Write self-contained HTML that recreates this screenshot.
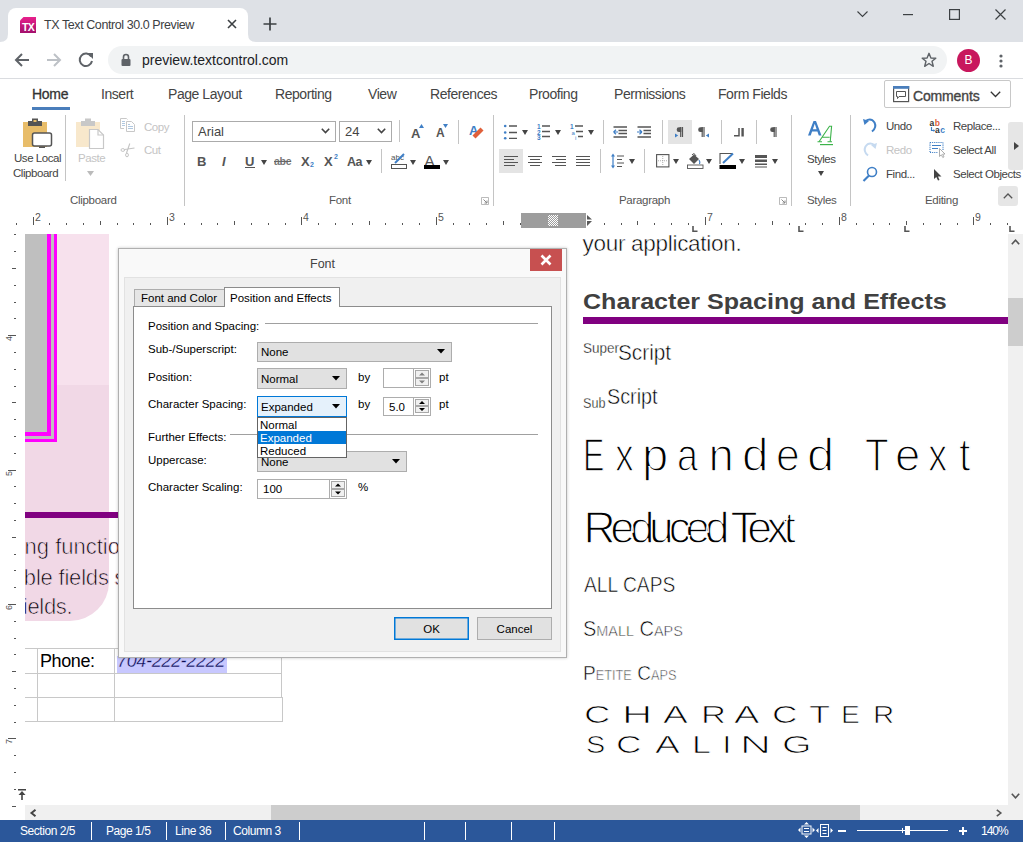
<!DOCTYPE html>
<html><head><meta charset="utf-8">
<style>
*{box-sizing:border-box;margin:0;padding:0}
html,body{width:1023px;height:842px;overflow:hidden;background:#fff;font-family:"Liberation Sans",sans-serif;}
.a{position:absolute}
.t{position:absolute;white-space:nowrap;line-height:1}
svg{position:absolute;overflow:visible}
#tabstrip{left:0;top:0;width:1023px;height:42px;background:#dee1e6}
#tab{left:8px;top:8px;width:240px;height:34px;background:#fff;border-radius:8px 8px 0 0}
#toolbar{left:0;top:42px;width:1023px;height:37px;background:#fff;border-bottom:1px solid #dadce0}
#omni{left:108px;top:46px;width:839px;height:28px;border-radius:14px;background:#f1f3f4}
#rtabs{left:0;top:79px;width:1023px;height:31px;background:#fff}
#ribbon{left:0;top:110px;width:1023px;height:100px;background:#fff;border-bottom:1px solid #c2c2c2}
#ruler{left:0;top:209px;width:1023px;height:23px;background:#fff}
#doc{left:0;top:232px;width:1023px;height:573px;background:#fff}
#hscroll{left:0;top:805px;width:1023px;height:15px;background:#f0f0f0}
#status{left:0;top:820px;width:1023px;height:22px;background:#2b579a}
#dlg{left:118px;top:248px;width:448px;height:409px;background:#f0f0f0;border:1px solid #aaa}
.rt{top:87.2px;font-size:14px;color:#444;letter-spacing:-0.45px}
.rb{font-size:11.5px;color:#444;letter-spacing:-0.45px}
.rl{top:194.5px;font-size:11.5px;color:#555;letter-spacing:-0.3px}
.sep{width:1px;background:#c4c4c4}
.dd{fill:#444}
.dt{font-size:22px;color:#000;-webkit-text-stroke:0.7px #f1d8e6}
.st{top:825px;font-size:12px;color:#fff;letter-spacing:-0.45px}
.ss{top:822px;width:1px;height:18px;background:#fff}
.dl{font-size:11.5px;color:#000;margin-top:1px}
.cb{background:#e1e1e1;border:1px solid #adadad}
.cbt{fill:#000}
.spin{width:16px;background:#e6e6e6;border:1px solid #adadad}
</style></head><body>
<!-- ============ CHROME ============ -->
<div id="tabstrip" class="a"></div>
<div id="tab" class="a"></div>
<svg style="left:0;top:34px" width="8" height="8"><path d="M0 8 Q8 8 8 0 L8 8 Z" fill="#fff"/></svg>
<svg style="left:248px;top:34px" width="8" height="8"><path d="M8 8 Q0 8 0 0 L0 8 Z" fill="#fff"/></svg>
<svg style="left:20px;top:17px" width="16" height="16"><defs><linearGradient id="fg" x1="0" y1="0" x2="0" y2="1"><stop offset="0" stop-color="#e8208c"/><stop offset="1" stop-color="#a3106c"/></linearGradient></defs><path d="M3.5 0 H16 V16 H0 V3.5 Z" fill="url(#fg)"/><text x="8" y="14" font-family="Liberation Sans" font-weight="bold" font-size="10.5" fill="#fff" text-anchor="middle" letter-spacing="-0.8">TX</text></svg>
<div class="t" style="left:44px;top:19px;font-size:12.5px;color:#3c4043;letter-spacing:-0.42px">TX Text Control 30.0 Preview</div>
<svg style="left:227px;top:19px" width="10" height="10"><path d="M1 1 L9 9 M9 1 L1 9" stroke="#3c4043" stroke-width="1.6"/></svg>
<svg style="left:263px;top:17px" width="14" height="14"><path d="M7 0.5 V13.5 M0.5 7 H13.5" stroke="#3c4043" stroke-width="1.7"/></svg>
<svg style="left:857px;top:11px" width="11" height="7"><path d="M0.5 0.5 L5.5 5.5 L10.5 0.5" stroke="#3c4043" stroke-width="1.1" fill="none"/></svg>
<svg style="left:903px;top:14px" width="11" height="1"><rect width="10" height="1.2" fill="#3c4043"/></svg>
<svg style="left:949px;top:9px" width="11" height="11"><rect x="0.6" y="0.6" width="9.8" height="9.8" stroke="#3c4043" stroke-width="1.2" fill="none"/></svg>
<svg style="left:995px;top:9px" width="11" height="11"><path d="M0.5 0.5 L10.5 10.5 M10.5 0.5 L0.5 10.5" stroke="#3c4043" stroke-width="1.2"/></svg>

<div id="toolbar" class="a"></div>
<svg style="left:14px;top:52px" width="16" height="16"><path d="M15 8 H2 M8 2 L2 8 L8 14" stroke="#5f6368" stroke-width="2" fill="none"/></svg>
<svg style="left:46px;top:52px" width="16" height="16"><path d="M1 8 H14 M8 2 L14 8 L8 14" stroke="#bdc1c6" stroke-width="2" fill="none"/></svg>
<svg style="left:78px;top:52px" width="16" height="16"><path d="M13.2 4.5 A6.2 6.2 0 1 0 14 9" stroke="#5f6368" stroke-width="2" fill="none"/><path d="M9 1 L15 1 L15 7 Z" fill="#5f6368"/></svg>
<div id="omni" class="a"></div>
<svg style="left:121px;top:53px" width="10" height="13"><path d="M2.5 6 V4 A2.5 2.5 0 0 1 7.5 4 V6" stroke="#5f6368" stroke-width="1.6" fill="none"/><rect x="0.5" y="6" width="9" height="7" rx="1" fill="#5f6368"/></svg>
<div class="t" style="left:142px;top:53px;font-size:14px;color:#202124">preview.textcontrol.com</div>
<svg style="left:921px;top:52px" width="16" height="16"><path d="M8 1.3 L9.9 6 L14.8 6.2 L11 9.3 L12.3 14.3 L8 11.5 L3.7 14.3 L5 9.3 L1.2 6.2 L6.1 6 Z" stroke="#5f6368" stroke-width="1.4" fill="none" stroke-linejoin="round"/></svg>
<div class="a" style="left:957px;top:49px;width:23px;height:23px;border-radius:50%;background:#c8175d"></div>
<div class="t" style="left:957px;top:54px;width:23px;text-align:center;font-size:12px;color:#fff">B</div>
<svg style="left:999px;top:54px" width="4" height="14"><circle cx="2" cy="2" r="1.6" fill="#5f6368"/><circle cx="2" cy="7" r="1.6" fill="#5f6368"/><circle cx="2" cy="12" r="1.6" fill="#5f6368"/></svg>


<div id="rtabs" class="a"></div>
<div class="t" style="left:32px;top:87.2px;font-size:14px;color:#333;-webkit-text-stroke:0.3px #333;letter-spacing:-0.3px">Home</div>
<div class="a" style="left:32px;top:107px;width:38px;height:3px;background:#4a7ebb"></div>
<div class="t rt" style="left:101px">Insert</div>
<div class="t rt" style="left:168px">Page Layout</div>
<div class="t rt" style="left:275px">Reporting</div>
<div class="t rt" style="left:368px">View</div>
<div class="t rt" style="left:430px">References</div>
<div class="t rt" style="left:529px">Proofing</div>
<div class="t rt" style="left:614px">Permissions</div>
<div class="t rt" style="left:718px">Form Fields</div>
<div class="a" style="left:884px;top:80px;width:127px;height:28px;border:1px solid #c8c8c8;border-radius:2px;background:#fff"></div>
<svg style="left:893px;top:86px" width="17" height="17"><rect x="0.6" y="0.6" width="15" height="15" fill="none" stroke="#555" stroke-width="1.2"/><rect x="0" y="0" width="16.2" height="2.8" fill="#4a7ebb"/><path d="M3.5 5.5 H12.5 V10.5 H6 L4.5 12.5 V10.5 H3.5 Z" fill="none" stroke="#555" stroke-width="1"/></svg>
<div class="t" style="left:913px;top:88.5px;font-size:14px;color:#444;-webkit-text-stroke:0.35px #444;letter-spacing:-0.15px">Comments</div>
<svg style="left:990px;top:91px" width="11" height="7"><path d="M0.8 0.8 L5.5 5.5 L10.2 0.8" stroke="#333" stroke-width="1.3" fill="none"/></svg>

<div id="ribbon" class="a"></div>
<!-- Clipboard group -->
<svg style="left:22px;top:118px" width="32" height="32">
 <rect x="1" y="4" width="24" height="25" fill="#e8bd6a"/>
 <rect x="6" y="3" width="14" height="5" fill="#555"/><rect x="10" y="0.5" width="6" height="4" fill="#555"/><rect x="11.5" y="2" width="3" height="2" fill="#e8bd6a"/>
 <rect x="10.5" y="15" width="19" height="13" rx="2" fill="#fff" stroke="#555" stroke-width="1.5"/>
 <rect x="17" y="28.5" width="6" height="1.5" fill="#555"/>
</svg>
<div class="t rb" style="left:14px;top:152.7px">Use Local</div>
<div class="t rb" style="left:13px;top:167.7px">Clipboard</div>
<div class="a" style="left:65px;top:115px;width:1px;height:66px;background:#c4c4c4"></div>
<svg style="left:76px;top:118px" width="30" height="32">
 <rect x="0" y="4" width="24" height="25" fill="#f8e8cc"/>
 <rect x="5" y="3" width="14" height="5" fill="#c8c8c8"/><rect x="9" y="0.5" width="6" height="4" fill="#c8c8c8"/>
 <path d="M13.5 11.5 H22 L27.5 17 V30.5 H13.5 Z" fill="#fff" stroke="#c8c8c8" stroke-width="1.2"/><path d="M22 11.5 V17 H27.5" fill="none" stroke="#c8c8c8" stroke-width="1.2"/>
</svg>
<div class="t rb" style="left:78px;top:152.7px;color:#c4c4c4">Paste</div>
<svg style="left:87px;top:171px" width="7" height="5"><path d="M0 0 H7 L3.5 5 Z" fill="#bbb"/></svg>
<svg style="left:119px;top:117px" width="18" height="16">
 <path d="M1.5 1.5 H7.5 L8.5 2.5 M1.5 1.5 V11.5 H5" stroke="#c8c8c8" fill="none"/>
 <path d="M7.5 4.5 H12.5 L15.5 7.5 V14.5 H7.5 Z" fill="#fff" stroke="#c8c8c8"/>
 <path d="M3 4.5 H6 M3 6.5 H6 M3 8.5 H6 M9 7.5 H11 M9 9.5 H14 M9 11.5 H14" stroke="#b0c8e0"/>
</svg>
<div class="t rb" style="left:144px;top:121.5px;color:#c4c4c4">Copy</div>
<svg style="left:120px;top:142px" width="16" height="16">
 <ellipse cx="2.8" cy="8" rx="1.8" ry="1.4" fill="none" stroke="#c4c4c4"/>
 <ellipse cx="7" cy="13" rx="1.4" ry="1.8" fill="none" stroke="#c4c4c4"/>
 <path d="M4.5 7.5 L14.5 6 M6.5 11 L9.8 1.5" stroke="#c4c4c4" stroke-width="1.1"/>
</svg>
<div class="t rb" style="left:144px;top:145px;color:#c4c4c4">Cut</div>
<div class="t rl" style="left:70px">Clipboard</div>
<div class="a sep" style="left:184px;top:115px;height:91px"></div>


<!-- Font group -->
<div class="a" style="left:192px;top:121px;width:144px;height:21px;border:1px solid #ababab;background:#fff"></div>
<div class="t" style="left:198px;top:125px;font-size:13px;color:#444">Arial</div>
<svg style="left:321px;top:128px" width="9" height="6"><path d="M0.8 0.8 L4.5 4.5 L8.2 0.8" stroke="#444" stroke-width="1.6" fill="none"/></svg>
<div class="a" style="left:339px;top:121px;width:53px;height:21px;border:1px solid #ababab;background:#fff"></div>
<div class="t" style="left:345px;top:125px;font-size:13px;color:#444">24</div>
<svg style="left:377px;top:128px" width="9" height="6"><path d="M0.8 0.8 L4.5 4.5 L8.2 0.8" stroke="#444" stroke-width="1.6" fill="none"/></svg>
<div class="a sep" style="left:399px;top:120px;height:22px"></div>
<div class="t" style="left:411px;top:127px;font-size:13px;font-weight:bold;color:#555">A</div>
<svg style="left:419px;top:124px" width="5" height="4"><path d="M0 4 L2.5 0 L5 4Z" fill="#3f7fc6"/></svg>
<div class="t" style="left:436px;top:127px;font-size:12px;font-weight:bold;color:#555">A</div>
<svg style="left:443px;top:124px" width="5" height="4"><path d="M0 0 L5 0 L2.5 4Z" fill="#3f7fc6"/></svg>
<div class="a sep" style="left:458px;top:120px;height:24px"></div>
<div class="t" style="left:469px;top:124px;font-size:13px;font-weight:bold;color:#3f7fc6">A</div>
<svg style="left:472px;top:127px" width="13" height="12"><path d="M2 10 L10 2" stroke="#e0603a" stroke-width="4.2"/></svg>
<div class="t" style="left:197px;top:155px;font-size:13px;font-weight:bold;color:#555">B</div>
<div class="t" style="left:222px;top:155px;font-size:13px;font-style:italic;font-weight:bold;color:#555">I</div>
<div class="t" style="left:245px;top:155px;font-size:13px;font-weight:bold;color:#555">U</div>
<div class="a" style="left:245px;top:167px;width:10px;height:1.2px;background:#555"></div>
<svg class="dd" style="left:261px;top:160px" width="6" height="5"><path d="M0 0 H6 L3 5Z"/></svg>
<div class="t" style="left:274px;top:156px;font-size:10.5px;font-weight:bold;color:#777;letter-spacing:-0.3px">abe</div>
<div class="a" style="left:274px;top:161px;width:17px;height:1px;background:#666"></div>
<div class="t" style="left:301px;top:155px;font-size:13px;font-weight:bold;color:#555">X</div>
<div class="t" style="left:310px;top:161px;font-size:7px;font-weight:bold;color:#3f7fc6">2</div>
<div class="t" style="left:324px;top:155px;font-size:13px;font-weight:bold;color:#555">X</div>
<div class="t" style="left:334px;top:153px;font-size:7px;font-weight:bold;color:#3f7fc6">2</div>
<div class="t" style="left:347px;top:156px;font-size:12.5px;font-weight:bold;color:#555;letter-spacing:-0.5px">Aa</div>
<svg class="dd" style="left:366px;top:160px" width="6" height="5"><path d="M0 0 H6 L3 5Z"/></svg>
<div class="a sep" style="left:381px;top:149px;height:24px"></div>
<svg style="left:390px;top:152px" width="18" height="18">
 <text x="1" y="8" font-family="Liberation Sans" font-size="8" fill="#555">abc</text>
 <path d="M5 11 L14 2" stroke="#3f7fc6" stroke-width="2"/>
 <rect x="1.5" y="12.5" width="15" height="4" fill="#fff" stroke="#555"/>
</svg>
<svg class="dd" style="left:410px;top:160px" width="6" height="5"><path d="M0 0 H6 L3 5Z"/></svg>
<div class="t" style="left:424.5px;top:152.5px;font-size:15px;color:#555">A</div>
<div class="a" style="left:424px;top:165px;width:16px;height:4px;background:#000"></div>
<svg class="dd" style="left:443px;top:160px" width="6" height="5"><path d="M0 0 H6 L3 5Z"/></svg>
<div class="t rl" style="left:329px">Font</div>
<svg style="left:481px;top:197px" width="8" height="8"><path d="M0.5 0.5 H7.5 V7.5 H0.5Z" fill="none" stroke="#aaa" stroke-width="0.8"/><path d="M2.5 2.5 L6 6 M6 3.5 V6 H3.5" stroke="#888" fill="none"/></svg>
<div class="a sep" style="left:493px;top:115px;height:91px"></div>

<!-- Paragraph group -->
<svg style="left:503px;top:124px" width="16" height="16" class="ic">
 <circle cx="2.2" cy="2" r="1.3" fill="#3f7fc6"/><circle cx="2.2" cy="8.5" r="1.3" fill="#3f7fc6"/><circle cx="2.2" cy="14.3" r="1.3" fill="#3f7fc6"/>
 <path d="M6 2 H14 M6 8.5 H14 M6 14.3 H14" stroke="#555" stroke-width="1.3"/>
</svg>
<svg class="dd" style="left:522px;top:130px" width="6" height="5"><path d="M0 0 H6 L3 5Z"/></svg>
<svg style="left:537px;top:123px" width="15" height="17">
 <text x="0" y="6" font-family="Liberation Sans" font-size="6.5" font-weight="bold" fill="#3f7fc6">1</text>
 <text x="0" y="11.5" font-family="Liberation Sans" font-size="6.5" font-weight="bold" fill="#3f7fc6">2</text>
 <text x="0" y="16.5" font-family="Liberation Sans" font-size="6.5" font-weight="bold" fill="#3f7fc6">3</text>
 <path d="M5 3 H13 M5 8.5 H13 M5 13.5 H13" stroke="#555" stroke-width="1.3"/>
</svg>
<svg class="dd" style="left:555px;top:130px" width="6" height="5"><path d="M0 0 H6 L3 5Z"/></svg>
<svg style="left:570px;top:123px" width="15" height="17">
 <text x="0" y="6" font-family="Liberation Sans" font-size="6.5" font-weight="bold" fill="#3f7fc6">1</text>
 <text x="1.5" y="11.5" font-family="Liberation Sans" font-size="6" fill="#3f7fc6">a</text>
 <text x="5" y="16.5" font-family="Liberation Sans" font-size="6" fill="#3f7fc6">i</text>
 <path d="M5 3 H13 M6 8.5 H13 M8 13.5 H13" stroke="#555" stroke-width="1.3"/>
</svg>
<svg class="dd" style="left:588px;top:130px" width="6" height="5"><path d="M0 0 H6 L3 5Z"/></svg>
<div class="a sep" style="left:603px;top:120px;height:24px"></div>
<svg style="left:613px;top:126px" width="15" height="12">
 <path d="M0.5 1 H14 M5.5 4.5 H14 M5.5 7.5 H14 M0.5 11 H14" stroke="#555" stroke-width="1.3"/>
 <path d="M0.5 6 H5 M0.5 6 L3 3.8 M0.5 6 L3 8.2" stroke="#3f7fc6" stroke-width="1.2" fill="none"/>
</svg>
<svg style="left:637px;top:126px" width="15" height="12">
 <path d="M0.5 1 H14 M6.5 4.5 H14 M6.5 7.5 H14 M0.5 11 H14" stroke="#555" stroke-width="1.3"/>
 <path d="M0 6 H5 M5 6 L2.5 3.8 M5 6 L2.5 8.2" stroke="#3f7fc6" stroke-width="1.2" fill="none"/>
</svg>
<div class="a sep" style="left:662px;top:120px;height:24px"></div>
<div class="a" style="left:668px;top:120px;width:24px;height:24px;background:#e4e4e4"></div>
<svg style="left:675px;top:127px" width="10" height="11"><path d="M5.7 0 V10 M7.5 0 V10" stroke="#555" stroke-width="1.2"/><path d="M6.3 0.3 H4.0 A2.3 2.3 0 0 0 4.0 5 H6.3Z" fill="#555"/><path d="M0 6.5 L3.2 8.5 L0 10.5Z" fill="#3f7fc6"/></svg>
<svg style="left:698px;top:127px" width="12" height="11"><path d="M4.2 0 V10 M6 0 V10" stroke="#555" stroke-width="1.2"/><path d="M4.8 0.3 H2.5 A2.3 2.3 0 0 0 2.5 5 H4.8Z" fill="#555"/><path d="M11 6.5 L7.8 8.5 L11 10.5Z" fill="#3f7fc6"/></svg>
<div class="a sep" style="left:721px;top:120px;height:24px"></div>
<svg style="left:734px;top:128px" width="11" height="9"><path d="M0 7.8 H5 V0" stroke="#555" stroke-width="1.5" fill="none"/><rect x="7.4" y="0" width="2.4" height="8.5" fill="#555"/></svg>
<div class="a sep" style="left:756px;top:120px;height:24px"></div>
<svg style="left:769px;top:127px" width="10" height="11"><path d="M5.2 0 V10 M7 0 V10" stroke="#555" stroke-width="1.2"/><path d="M5.8 0.3 H3.5 A2.3 2.3 0 0 0 3.5 5 H5.8Z" fill="#555"/></svg>

<div class="a" style="left:499px;top:149px;width:24px;height:24px;background:#e4e4e4"></div>
<svg style="left:504px;top:155px" width="15" height="12"><path d="M0 1.5 H14 M0 4.5 H10 M0 7.5 H14 M0 10.5 H11" stroke="#555" stroke-width="1"/></svg>
<svg style="left:528px;top:155px" width="15" height="12"><path d="M0 1.5 H14 M2 4.5 H12 M0 7.5 H14 M2 10.5 H12" stroke="#555" stroke-width="1"/></svg>
<svg style="left:552px;top:155px" width="15" height="12"><path d="M0 1.5 H14 M4 4.5 H14 M0 7.5 H14 M3 10.5 H14" stroke="#555" stroke-width="1"/></svg>
<svg style="left:576px;top:155px" width="15" height="12"><path d="M0 1.5 H14 M0 4.5 H14 M0 7.5 H14 M0 10.5 H14" stroke="#555" stroke-width="1"/></svg>
<div class="a sep" style="left:600px;top:149px;height:24px"></div>
<svg style="left:611px;top:153px" width="14" height="16">
 <path d="M2 2 V14" stroke="#3f7fc6" stroke-width="1.2"/><path d="M0 3.5 L2 0.5 L4 3.5Z M0 12.5 L2 15.5 L4 12.5Z" fill="#3f7fc6"/>
 <path d="M6 3 H13 M6 6.5 H11 M6 10 H13 M6 13.5 H11" stroke="#555" stroke-width="1.2"/>
</svg>
<svg class="dd" style="left:629px;top:159px" width="6" height="5"><path d="M0 0 H6 L3 5Z"/></svg>
<div class="a sep" style="left:644px;top:149px;height:24px"></div>
<svg style="left:656px;top:154px" width="14" height="14"><rect x="0.6" y="0.6" width="12.3" height="12.3" fill="none" stroke="#555" stroke-width="1.1"/><path d="M6.75 2 V12 M2 6.75 H12" stroke="#999" stroke-width="0.8" stroke-dasharray="1 1"/></svg>
<svg class="dd" style="left:673px;top:159px" width="6" height="5"><path d="M0 0 H6 L3 5Z"/></svg>
<svg style="left:687px;top:153px" width="17" height="16">
 <path d="M2 6 L7 1.5 L12 6 L7 11 Z" fill="#555"/><path d="M5 2 Q7 -1 9 3" stroke="#555" fill="none"/>
 <path d="M12 7 Q13.5 9 12.5 11" stroke="#3f7fc6" stroke-width="1.2" fill="none"/>
 <rect x="0.5" y="12" width="15.5" height="3.5" fill="#fff" stroke="#555" stroke-width="0.9"/>
</svg>
<svg class="dd" style="left:706px;top:159px" width="6" height="5"><path d="M0 0 H6 L3 5Z"/></svg>
<svg style="left:719px;top:152px" width="18" height="18">
 <path d="M1 12 V1.5 H13" stroke="#555" stroke-width="1.1" fill="none"/>
 <path d="M4 11 L14 1.5" stroke="#3f7fc6" stroke-width="2"/>
 <rect x="0.5" y="13" width="16.5" height="4" fill="#000"/>
</svg>
<svg class="dd" style="left:739px;top:159px" width="6" height="5"><path d="M0 0 H6 L3 5Z"/></svg>
<svg style="left:755px;top:155px" width="13" height="13"><rect x="0" y="0" width="12" height="3" fill="#555"/><rect x="0" y="4.5" width="12" height="2.5" fill="#555"/><rect x="0" y="8.5" width="12" height="1.5" fill="#555"/><rect x="0" y="11.5" width="12" height="1" fill="#555"/></svg>
<svg class="dd" style="left:772px;top:159px" width="6" height="5"><path d="M0 0 H6 L3 5Z"/></svg>
<div class="t rl" style="left:619px">Paragraph</div>
<svg style="left:779px;top:197px" width="8" height="8"><path d="M0.5 0.5 H7.5 V7.5 H0.5Z" fill="none" stroke="#aaa" stroke-width="0.8"/><path d="M2.5 2.5 L6 6 M6 3.5 V6 H3.5" stroke="#888" fill="none"/></svg>
<div class="a sep" style="left:791px;top:115px;height:91px"></div>

<!-- Styles group -->
<svg style="left:806px;top:119px" width="30" height="28">
 <path d="M2 16.5 L7.5 2 H10 L15.5 16.5 H12.8 L11.4 12.6 H6.1 L4.7 16.5 Z M6.9 10.3 H10.6 L8.75 4.8 Z" fill="#3f7fc6"/>
 <path d="M13 22.8 L23.5 7.3 H25.6 L24.2 22.8 M16.3 18.2 H23.7" stroke="#3cb34a" stroke-width="1.1" fill="none"/>
 <path d="M11.5 22.8 H16 M21.5 22.8 H26" stroke="#3cb34a" stroke-width="1.1"/>
 <rect x="14" y="25" width="13" height="1.2" fill="#3cb34a"/>
</svg>
<div class="t rb" style="left:807px;top:153.5px">Styles</div>
<svg class="dd" style="left:818px;top:171px" width="6" height="5"><path d="M0 0 H6 L3 5Z"/></svg>
<div class="t rl" style="left:807px">Styles</div>
<div class="a sep" style="left:850px;top:115px;height:91px"></div>

<!-- Editing group -->
<svg style="left:862px;top:118px" width="16" height="16"><path d="M3.5 3 Q9 -0.5 12.5 4.5 Q15 9.5 10 13.5" stroke="#3f7fc6" stroke-width="2" fill="none"/><path d="M1 1 L7 3 L2.5 7Z" fill="#3f7fc6"/></svg>
<div class="t rb" style="left:886px;top:121px">Undo</div>
<svg style="left:862px;top:142px" width="16" height="16"><path d="M12.5 3 Q7 -0.5 3.5 4.5 Q1 9.5 6 13.5" stroke="#c6daf0" stroke-width="2" fill="none"/><path d="M15 1 L9 3 L13.5 7Z" fill="#c6daf0"/></svg>
<div class="t rb" style="left:886px;top:145px;color:#c4c4c4">Redo</div>
<svg style="left:862px;top:166px" width="16" height="16"><circle cx="10" cy="6" r="4.5" fill="none" stroke="#3f7fc6" stroke-width="1.6"/><path d="M7 9.5 L1.5 15" stroke="#3f7fc6" stroke-width="2.2"/></svg>
<div class="t rb" style="left:886px;top:169px">Find...</div>
<svg style="left:929px;top:118px" width="18" height="16">
 <text x="0.5" y="7.8" font-family="Liberation Sans" font-size="8.5" font-weight="bold" fill="#333">a</text>
 <text x="5.8" y="7.8" font-family="Liberation Sans" font-size="8.5" font-weight="bold" fill="#e0603a">b</text>
 <text x="6" y="14.8" font-family="Liberation Sans" font-size="8.5" font-weight="bold" fill="#333">a</text>
 <text x="11.2" y="14.8" font-family="Liberation Sans" font-size="8.5" font-weight="bold" fill="#3f7fc6">c</text>
 <path d="M2.5 9 V12.5 H5.5" stroke="#3f7fc6" stroke-width="1.2" fill="none"/><path d="M4.5 11 L6 12.5 L4.5 14Z" fill="#3f7fc6"/>
</svg>
<div class="t rb" style="left:953px;top:121px">Replace...</div>
<svg style="left:929px;top:141px" width="18" height="17">
 <path d="M1 1.5 H14 M1 11.5 H9 M1 1.5 V11.5 M14 1.5 V9" stroke="#3f7fc6" stroke-width="1.1" stroke-dasharray="1.1 1" fill="none"/>
 <path d="M3 4.5 H12 M3 7.5 H9" stroke="#3f7fc6" stroke-width="1.1"/>
 <path d="M10.5 7.5 V15.5 L12.3 13.8 L13.8 16.5 L15 15.8 L13.6 13.2 L16 13 Z" fill="#fff" stroke="#999" stroke-width="0.8" stroke-linejoin="round"/>
</svg>
<div class="t rb" style="left:953px;top:145px">Select All</div>
<svg style="left:934px;top:169px" width="8" height="12"><path d="M0 0 V10 L2.3 8 L4 11.5 L5.5 11 L4 7.5 L7.5 7.5Z" fill="#444"/></svg>
<div class="t rb" style="left:953px;top:169px">Select Objects</div>
<div class="t rl" style="left:925px">Editing</div>
<div class="a" style="left:1008px;top:122px;width:16px;height:48px;background:#e6e6e6;border-radius:3px"></div>
<svg style="left:1014px;top:142px" width="5" height="8"><path d="M0 0 L5 4 L0 8Z" fill="#444"/></svg>
<div class="a" style="left:998px;top:186px;width:20px;height:20px;background:#e6e6e6;border-radius:3px"></div>
<svg style="left:1003px;top:193px" width="10" height="6"><path d="M0.8 5.2 L5 1 L9.2 5.2" stroke="#555" stroke-width="1.3" fill="none"/></svg>
<div id="ruler" class="a"></div>
<div class="a" style="left:16px;top:223px;width:1px;height:2px;background:#555"></div>
<div class="a" style="left:33px;top:217px;width:1px;height:8px;background:#555"></div>
<div class="t" style="left:35px;top:212px;font-size:10.5px;color:#555">2</div>
<div class="a" style="left:49px;top:223px;width:1px;height:2px;background:#555"></div>
<div class="a" style="left:66px;top:223px;width:1px;height:2px;background:#555"></div>
<div class="a" style="left:83px;top:223px;width:1px;height:2px;background:#555"></div>
<div class="a" style="left:100px;top:221px;width:1px;height:4px;background:#555"></div>
<div class="a" style="left:117px;top:223px;width:1px;height:2px;background:#555"></div>
<div class="a" style="left:133px;top:223px;width:1px;height:2px;background:#555"></div>
<div class="a" style="left:150px;top:223px;width:1px;height:2px;background:#555"></div>
<div class="a" style="left:167px;top:217px;width:1px;height:8px;background:#555"></div>
<div class="t" style="left:169px;top:212px;font-size:10.5px;color:#555">3</div>
<div class="a" style="left:184px;top:223px;width:1px;height:2px;background:#555"></div>
<div class="a" style="left:201px;top:223px;width:1px;height:2px;background:#555"></div>
<div class="a" style="left:217px;top:223px;width:1px;height:2px;background:#555"></div>
<div class="a" style="left:234px;top:221px;width:1px;height:4px;background:#555"></div>
<div class="a" style="left:251px;top:223px;width:1px;height:2px;background:#555"></div>
<div class="a" style="left:268px;top:223px;width:1px;height:2px;background:#555"></div>
<div class="a" style="left:285px;top:223px;width:1px;height:2px;background:#555"></div>
<div class="a" style="left:301px;top:217px;width:1px;height:8px;background:#555"></div>
<div class="t" style="left:303px;top:212px;font-size:10.5px;color:#555">4</div>
<div class="a" style="left:318px;top:223px;width:1px;height:2px;background:#555"></div>
<div class="a" style="left:335px;top:223px;width:1px;height:2px;background:#555"></div>
<div class="a" style="left:352px;top:223px;width:1px;height:2px;background:#555"></div>
<div class="a" style="left:369px;top:221px;width:1px;height:4px;background:#555"></div>
<div class="a" style="left:385px;top:223px;width:1px;height:2px;background:#555"></div>
<div class="a" style="left:402px;top:223px;width:1px;height:2px;background:#555"></div>
<div class="a" style="left:419px;top:223px;width:1px;height:2px;background:#555"></div>
<div class="a" style="left:436px;top:217px;width:1px;height:8px;background:#555"></div>
<div class="t" style="left:438px;top:212px;font-size:10.5px;color:#555">5</div>
<div class="a" style="left:453px;top:223px;width:1px;height:2px;background:#555"></div>
<div class="a" style="left:469px;top:223px;width:1px;height:2px;background:#555"></div>
<div class="a" style="left:486px;top:223px;width:1px;height:2px;background:#555"></div>
<div class="a" style="left:503px;top:221px;width:1px;height:4px;background:#555"></div>
<div class="a" style="left:520px;top:223px;width:1px;height:2px;background:#555"></div>
<div class="a" style="left:537px;top:223px;width:1px;height:2px;background:#555"></div>
<div class="a" style="left:553px;top:223px;width:1px;height:2px;background:#555"></div>
<div class="a" style="left:570px;top:217px;width:1px;height:8px;background:#555"></div>
<div class="t" style="left:572px;top:212px;font-size:10.5px;color:#555">6</div>
<div class="a" style="left:587px;top:223px;width:1px;height:2px;background:#555"></div>
<div class="a" style="left:604px;top:223px;width:1px;height:2px;background:#555"></div>
<div class="a" style="left:621px;top:223px;width:1px;height:2px;background:#555"></div>
<div class="a" style="left:637px;top:221px;width:1px;height:4px;background:#555"></div>
<div class="a" style="left:654px;top:223px;width:1px;height:2px;background:#555"></div>
<div class="a" style="left:671px;top:223px;width:1px;height:2px;background:#555"></div>
<div class="a" style="left:688px;top:223px;width:1px;height:2px;background:#555"></div>
<div class="a" style="left:705px;top:217px;width:1px;height:8px;background:#555"></div>
<div class="t" style="left:707px;top:212px;font-size:10.5px;color:#555">7</div>
<div class="a" style="left:721px;top:223px;width:1px;height:2px;background:#555"></div>
<div class="a" style="left:738px;top:223px;width:1px;height:2px;background:#555"></div>
<div class="a" style="left:755px;top:223px;width:1px;height:2px;background:#555"></div>
<div class="a" style="left:772px;top:221px;width:1px;height:4px;background:#555"></div>
<div class="a" style="left:789px;top:223px;width:1px;height:2px;background:#555"></div>
<div class="a" style="left:805px;top:223px;width:1px;height:2px;background:#555"></div>
<div class="a" style="left:822px;top:223px;width:1px;height:2px;background:#555"></div>
<div class="a" style="left:839px;top:217px;width:1px;height:8px;background:#555"></div>
<div class="t" style="left:841px;top:212px;font-size:10.5px;color:#555">8</div>
<div class="a" style="left:856px;top:223px;width:1px;height:2px;background:#555"></div>
<div class="a" style="left:873px;top:223px;width:1px;height:2px;background:#555"></div>
<div class="a" style="left:889px;top:223px;width:1px;height:2px;background:#555"></div>
<div class="a" style="left:906px;top:221px;width:1px;height:4px;background:#555"></div>
<div class="a" style="left:923px;top:223px;width:1px;height:2px;background:#555"></div>
<div class="a" style="left:940px;top:223px;width:1px;height:2px;background:#555"></div>
<div class="a" style="left:957px;top:223px;width:1px;height:2px;background:#555"></div>
<div class="a" style="left:973px;top:217px;width:1px;height:8px;background:#555"></div>
<div class="t" style="left:975px;top:212px;font-size:10.5px;color:#555">9</div>
<div class="a" style="left:990px;top:223px;width:1px;height:2px;background:#555"></div>
<div class="a" style="left:1007px;top:223px;width:1px;height:2px;background:#555"></div>
<div class="a" style="left:521px;top:213px;width:65px;height:15px;background:#9d9d9d"></div>
<div class="a" style="left:548px;top:215px;width:10px;height:11px;background:repeating-conic-gradient(#fff 0 25%,#9d9d9d 0 50%) 0 0/2px 2px"></div>
<svg style="left:587px;top:215px" width="6" height="11"><path d="M0 0 L5 4.6 H0Z M0 6 H5 L0 11Z" fill="#5a5a5a"/></svg>
<svg style="left:692px;top:226px" width="6" height="6"><path d="M1 0 V5.2 H5.5" stroke="#555" stroke-width="1.6" fill="none"/></svg>
<svg style="left:798px;top:226px" width="6" height="6"><path d="M1 0 V5.2 H5.5" stroke="#555" stroke-width="1.6" fill="none"/></svg>
<svg style="left:904px;top:226px" width="6" height="6"><path d="M1 0 V5.2 H5.5" stroke="#555" stroke-width="1.6" fill="none"/></svg>
<svg style="left:1009px;top:226px" width="6" height="6"><path d="M1 0 V5.2 H5.5" stroke="#555" stroke-width="1.6" fill="none"/></svg>

<div class="a" style="left:14px;top:234px;width:2px;height:1px;background:#555"></div>
<div class="a" style="left:14px;top:251px;width:2px;height:1px;background:#555"></div>
<div class="a" style="left:12px;top:268px;width:4px;height:1px;background:#555"></div>
<div class="a" style="left:14px;top:285px;width:2px;height:1px;background:#555"></div>
<div class="a" style="left:14px;top:302px;width:2px;height:1px;background:#555"></div>
<div class="a" style="left:14px;top:318px;width:2px;height:1px;background:#555"></div>
<div class="a" style="left:8px;top:335px;width:8px;height:1px;background:#555"></div>
<div class="t" style="left:4.5px;top:331px;width:10px;height:10px;font-size:9px;color:#555;transform:rotate(-90deg)">4</div>
<div class="a" style="left:14px;top:352px;width:2px;height:1px;background:#555"></div>
<div class="a" style="left:14px;top:369px;width:2px;height:1px;background:#555"></div>
<div class="a" style="left:14px;top:386px;width:2px;height:1px;background:#555"></div>
<div class="a" style="left:12px;top:402px;width:4px;height:1px;background:#555"></div>
<div class="a" style="left:14px;top:419px;width:2px;height:1px;background:#555"></div>
<div class="a" style="left:14px;top:436px;width:2px;height:1px;background:#555"></div>
<div class="a" style="left:14px;top:453px;width:2px;height:1px;background:#555"></div>
<div class="a" style="left:8px;top:470px;width:8px;height:1px;background:#555"></div>
<div class="t" style="left:4.5px;top:466px;width:10px;height:10px;font-size:9px;color:#555;transform:rotate(-90deg)">5</div>
<div class="a" style="left:14px;top:486px;width:2px;height:1px;background:#555"></div>
<div class="a" style="left:14px;top:503px;width:2px;height:1px;background:#555"></div>
<div class="a" style="left:14px;top:520px;width:2px;height:1px;background:#555"></div>
<div class="a" style="left:12px;top:537px;width:4px;height:1px;background:#555"></div>
<div class="a" style="left:14px;top:554px;width:2px;height:1px;background:#555"></div>
<div class="a" style="left:14px;top:570px;width:2px;height:1px;background:#555"></div>
<div class="a" style="left:14px;top:587px;width:2px;height:1px;background:#555"></div>
<div class="a" style="left:8px;top:604px;width:8px;height:1px;background:#555"></div>
<div class="t" style="left:4.5px;top:600px;width:10px;height:10px;font-size:9px;color:#555;transform:rotate(-90deg)">6</div>
<div class="a" style="left:14px;top:621px;width:2px;height:1px;background:#555"></div>
<div class="a" style="left:14px;top:638px;width:2px;height:1px;background:#555"></div>
<div class="a" style="left:14px;top:654px;width:2px;height:1px;background:#555"></div>
<div class="a" style="left:12px;top:671px;width:4px;height:1px;background:#555"></div>
<div class="a" style="left:14px;top:688px;width:2px;height:1px;background:#555"></div>
<div class="a" style="left:14px;top:705px;width:2px;height:1px;background:#555"></div>
<div class="a" style="left:14px;top:722px;width:2px;height:1px;background:#555"></div>
<div class="a" style="left:8px;top:738px;width:8px;height:1px;background:#555"></div>
<div class="t" style="left:4.5px;top:734px;width:10px;height:10px;font-size:9px;color:#555;transform:rotate(-90deg)">7</div>
<div class="a" style="left:14px;top:755px;width:2px;height:1px;background:#555"></div>
<div class="a" style="left:14px;top:772px;width:2px;height:1px;background:#555"></div>
<div class="a" style="left:14px;top:789px;width:2px;height:1px;background:#555"></div>
<div class="a" style="left:12px;top:806px;width:4px;height:1px;background:#555"></div>
<!-- ============ DOCUMENT ============ -->
<div class="a" style="left:25px;top:232px;width:93px;height:573px;overflow:hidden">
  <div class="a" style="left:0;top:2px;width:84px;height:153px;background:#f7e1ed"></div>
  <div class="a" style="left:0;top:153px;width:84px;height:236px;background:#f1d8e6;border-bottom-right-radius:39px"></div>
  <div class="a" style="left:0;top:2px;width:32px;height:208px;background:#ff00ff"></div>
  <div class="a" style="left:0;top:2px;width:29px;height:205px;background:#bfbfbf"></div>
  <div class="a" style="left:0;top:2px;width:26px;height:202px;background:#ff00ff"></div>
  <div class="a" style="left:0;top:2px;width:22px;height:198px;background:#bfbfbf"></div>
  <div class="a" style="left:0;top:280px;width:93px;height:6px;background:#800080"></div>
  <div class="t dt" style="left:-5.3px;top:303.5px">ing functionality</div>
  <div class="t dt" style="left:-13.2px;top:334.5px;letter-spacing:-0.2px">able fields s</div>
  <div class="t dt" style="left:-8px;top:363.5px;letter-spacing:-0.3px">fields.</div>
</div>
<!-- table -->
<div class="a" style="left:25px;top:648px;width:257px;height:1px;background:#c8c8c8"></div>
<div class="a" style="left:25px;top:673px;width:257px;height:1px;background:#c8c8c8"></div>
<div class="a" style="left:25px;top:697px;width:257px;height:1px;background:#c8c8c8"></div>
<div class="a" style="left:25px;top:721px;width:258px;height:1px;background:#c8c8c8"></div>
<div class="a" style="left:37px;top:648px;width:1px;height:74px;background:#c8c8c8"></div>
<div class="a" style="left:114px;top:648px;width:1px;height:74px;background:#c8c8c8"></div>
<div class="a" style="left:281px;top:648px;width:1px;height:50px;background:#c8c8c8"></div>
<div class="a" style="left:282px;top:697px;width:1px;height:25px;background:#c8c8c8"></div>
<div class="t" style="left:40px;top:651.5px;font-size:18px;color:#000;letter-spacing:-0.4px">Phone:</div>
<div class="a" style="left:117px;top:656px;width:110px;height:17px;background:#c8c8ff"></div>
<div class="t" style="left:117px;top:651.5px;font-size:18px;color:#0a0a50;font-style:italic;letter-spacing:-0.35px;-webkit-text-stroke:0.35px #c8c8ff">704-222-2222</div>

<!-- right page -->
<div class="t dt" style="left:582.6px;top:233.3px;font-size:22.5px;letter-spacing:-0.3px;-webkit-text-stroke:0.5px #fff">your application.</div>
<div class="t" style="left:583px;top:291px;font-size:22px;font-weight:bold;color:#404040;letter-spacing:0px;transform:scaleX(1.14);transform-origin:0 0">Character Spacing and Effects</div>
<div class="a" style="left:583px;top:317px;width:425px;height:7px;background:#800080"></div>
<div class="t" style="left:583px;top:340.4px;font-size:15.5px;color:#000;-webkit-text-stroke:0.35px #fff;transform:scaleX(0.87);transform-origin:0 0">Super</div>
<div class="t" style="left:618px;top:342.4px;font-size:22px;color:#000;-webkit-text-stroke:0.5px #fff;transform:scaleX(0.945);transform-origin:0 0">Script</div>
<div class="t" style="left:583px;top:395.6px;font-size:14px;color:#000;-webkit-text-stroke:0.35px #fff;transform:scaleX(0.9);transform-origin:0 0">Sub</div>
<div class="t" style="left:606.8px;top:386.4px;font-size:22px;color:#000;-webkit-text-stroke:0.5px #fff;transform:scaleX(0.9);transform-origin:0 0">Script</div>
<div class="t" style="left:583.0px;top:432.8px;font-size:45.5px;color:#000;transform:scaleX(0.707);transform-origin:0 0;-webkit-text-stroke:1.4px #fff">E</div>
<div class="t" style="left:614.8px;top:432.8px;font-size:45.5px;color:#000;transform:scaleX(0.831);transform-origin:0 0;-webkit-text-stroke:1.4px #fff">x</div>
<div class="t" style="left:642.3px;top:432.8px;font-size:45.5px;color:#000;transform:scaleX(1.038);transform-origin:0 0;-webkit-text-stroke:1.4px #fff">p</div>
<div class="t" style="left:676.8px;top:432.8px;font-size:45.5px;color:#000;transform:scaleX(0.827);transform-origin:0 0;-webkit-text-stroke:1.4px #fff">a</div>
<div class="t" style="left:708.5px;top:432.8px;font-size:45.5px;color:#000;transform:scaleX(1.000);transform-origin:0 0;-webkit-text-stroke:1.4px #fff">n</div>
<div class="t" style="left:741.6px;top:432.8px;font-size:45.5px;color:#000;transform:scaleX(1.046);transform-origin:0 0;-webkit-text-stroke:1.4px #fff">d</div>
<div class="t" style="left:776.0px;top:432.8px;font-size:45.5px;color:#000;transform:scaleX(0.938);transform-origin:0 0;-webkit-text-stroke:1.4px #fff">e</div>
<div class="t" style="left:807.1px;top:432.8px;font-size:45.5px;color:#000;transform:scaleX(1.074);transform-origin:0 0;-webkit-text-stroke:1.4px #fff">d</div>
<div class="t" style="left:864.7px;top:432.8px;font-size:45.5px;color:#000;transform:scaleX(0.852);transform-origin:0 0;-webkit-text-stroke:1.4px #fff">T</div>
<div class="t" style="left:895.2px;top:432.8px;font-size:45.5px;color:#000;transform:scaleX(0.999);transform-origin:0 0;-webkit-text-stroke:1.4px #fff">e</div>
<div class="t" style="left:927.8px;top:432.8px;font-size:45.5px;color:#000;transform:scaleX(0.853);transform-origin:0 0;-webkit-text-stroke:1.4px #fff">x</div>
<div class="t" style="left:959.1px;top:432.8px;font-size:45.5px;color:#000;transform:scaleX(0.906);transform-origin:0 0;-webkit-text-stroke:1.4px #fff">t</div>
<div class="t" style="left:584.2px;top:703.8px;font-size:23px;color:#000;transform:scaleX(1.588);transform-origin:0 0;-webkit-text-stroke:0.7px #fff">C</div>
<div class="t" style="left:622.4px;top:703.8px;font-size:23px;color:#000;transform:scaleX(1.816);transform-origin:0 0;-webkit-text-stroke:0.7px #fff">H</div>
<div class="t" style="left:663.4px;top:703.8px;font-size:23px;color:#000;transform:scaleX(1.618);transform-origin:0 0;-webkit-text-stroke:0.7px #fff">A</div>
<div class="t" style="left:701.2px;top:703.8px;font-size:23px;color:#000;transform:scaleX(1.505);transform-origin:0 0;-webkit-text-stroke:0.7px #fff">R</div>
<div class="t" style="left:733.6px;top:703.8px;font-size:23px;color:#000;transform:scaleX(1.650);transform-origin:0 0;-webkit-text-stroke:0.7px #fff">A</div>
<div class="t" style="left:771.6px;top:703.8px;font-size:23px;color:#000;transform:scaleX(1.534);transform-origin:0 0;-webkit-text-stroke:0.7px #fff">C</div>
<div class="t" style="left:808.7px;top:703.8px;font-size:23px;color:#000;transform:scaleX(1.512);transform-origin:0 0;-webkit-text-stroke:0.7px #fff">T</div>
<div class="t" style="left:840.6px;top:703.8px;font-size:23px;color:#000;transform:scaleX(1.232);transform-origin:0 0;-webkit-text-stroke:0.7px #fff">E</div>
<div class="t" style="left:872.7px;top:703.8px;font-size:23px;color:#000;transform:scaleX(1.277);transform-origin:0 0;-webkit-text-stroke:0.7px #fff">R</div>
<div class="t" style="left:585.7px;top:733.9px;font-size:23px;color:#000;transform:scaleX(1.259);transform-origin:0 0;-webkit-text-stroke:0.7px #fff">S</div>
<div class="t" style="left:616.3px;top:733.9px;font-size:23px;color:#000;transform:scaleX(1.534);transform-origin:0 0;-webkit-text-stroke:0.7px #fff">C</div>
<div class="t" style="left:654.6px;top:733.9px;font-size:23px;color:#000;transform:scaleX(1.618);transform-origin:0 0;-webkit-text-stroke:0.7px #fff">A</div>
<div class="t" style="left:692.0px;top:733.9px;font-size:23px;color:#000;transform:scaleX(1.487);transform-origin:0 0;-webkit-text-stroke:0.7px #fff">L</div>
<div class="t" style="left:721.6px;top:733.9px;font-size:23px;color:#000;transform:scaleX(1.511);transform-origin:0 0;-webkit-text-stroke:0.7px #fff">I</div>
<div class="t" style="left:740.3px;top:733.9px;font-size:23px;color:#000;transform:scaleX(1.863);transform-origin:0 0;-webkit-text-stroke:0.7px #fff">N</div>
<div class="t" style="left:781.7px;top:733.9px;font-size:23px;color:#000;transform:scaleX(1.650);transform-origin:0 0;-webkit-text-stroke:0.7px #fff">G</div>
<div class="t" style="left:583.5px;top:506px;font-size:44.5px;color:#000;letter-spacing:-5.35px;-webkit-text-stroke:1.3px #fff">Reduced Text</div>
<div class="t" style="left:583.5px;top:574.2px;font-size:22px;color:#000;-webkit-text-stroke:0.6px #fff;transform:scaleX(0.875);transform-origin:0 0">ALL CAPS</div>
<div class="t" style="left:583.3px;top:618.5px;font-size:21.5px;color:#000;-webkit-text-stroke:0.6px #fff;transform:scaleX(0.93);transform-origin:0 0">S<span style="font-size:15.5px">MALL</span> C<span style="font-size:15.5px">APS</span></div>
<div class="t" style="left:582.5px;top:662px;font-size:21px;color:#000;-webkit-text-stroke:0.6px #fff;transform:scaleX(0.91);transform-origin:0 0">P<span style="font-size:14px">ETITE</span> C<span style="font-size:14px">APS</span></div>

<!-- vertical scrollbar -->
<div class="a" style="left:1008px;top:234px;width:15px;height:571px;background:#f0f0f0"></div>
<div class="a" style="left:1008px;top:298px;width:15px;height:48px;background:#cdcdcd"></div>
<svg style="left:1011px;top:239px" width="9" height="6"><path d="M0.8 5.2 L4.5 1.2 L8.2 5.2" stroke="#555" stroke-width="1.6" fill="none"/></svg>
<svg style="left:1011px;top:793px" width="9" height="6"><path d="M0.8 0.8 L4.5 4.8 L8.2 0.8" stroke="#555" stroke-width="1.6" fill="none"/></svg>
<!-- horizontal scrollbar -->
<div class="a" style="left:25px;top:805px;width:998px;height:15px;background:#f0f0f0"></div>
<div class="a" style="left:271px;top:805px;width:589px;height:15px;background:#cdcdcd"></div>
<svg style="left:30px;top:809px" width="7" height="8"><path d="M5.5 0.8 L1.5 4 L5.5 7.2" stroke="#444" stroke-width="2" fill="none"/></svg>
<svg style="left:996px;top:809px" width="6" height="8"><path d="M0.8 0.8 L4.8 4 L0.8 7.2" stroke="#555" stroke-width="1.6" fill="none"/></svg>
<svg style="left:18px;top:789px" width="8" height="11"><path d="M0 0.8 H8 M4 3 V11" stroke="#444" stroke-width="1.6"/><path d="M0.5 6 L4 2 L7.5 6Z" fill="#444"/></svg>

<!-- status bar -->
<div id="status" class="a"></div>
<div class="t st" style="left:20px">Section 2/5</div>
<div class="a ss" style="left:91px"></div>
<div class="t st" style="left:106px">Page 1/5</div>
<div class="a ss" style="left:166px"></div>
<div class="t st" style="left:175px">Line 36</div>
<div class="a ss" style="left:225px"></div>
<div class="t st" style="left:233px">Column 3</div>
<div class="a ss" style="left:299px"></div>
<div class="a ss" style="left:424px"></div>
<div class="a ss" style="left:465px"></div>
<div class="a ss" style="left:511px"></div>
<div class="a ss" style="left:554px"></div>
<svg style="left:798px;top:822px" width="17" height="16"><path d="M8.5 0 L11 2.5 H6Z M8.5 16 L11 13.5 H6Z M0 8 L2.5 5.5 V10.5Z M17 8 L14.5 5.5 V10.5Z" fill="#fff"/><rect x="4" y="4" width="9" height="8" fill="none" stroke="#fff"/><path d="M6 6.5 H11 M6 9.5 H11" stroke="#fff"/></svg>
<svg style="left:816px;top:823px" width="17" height="15"><path d="M0 7.5 L2.5 5 V10Z M17 7.5 L14.5 5 V10Z" fill="#fff"/><rect x="4.5" y="1.5" width="8" height="12" fill="none" stroke="#fff"/><path d="M6.5 4.5 H10.5 M6.5 7.5 H10.5 M6.5 10.5 H10.5" stroke="#fff"/></svg>
<div class="a" style="left:838px;top:830px;width:8px;height:2px;background:#fff"></div>
<div class="a" style="left:857px;top:830px;width:91px;height:1px;background:#fff"></div>
<div class="a" style="left:902px;top:828px;width:1px;height:5px;background:#fff"></div>
<div class="a" style="left:905px;top:826px;width:5px;height:9px;background:#fff"></div>
<div class="a" style="left:959px;top:830px;width:8px;height:2px;background:#fff"></div>
<div class="a" style="left:962px;top:827px;width:2px;height:8px;background:#fff"></div>
<div class="t st" style="left:981px;letter-spacing:-1px">140%</div>


<!-- ============ DIALOG ============ -->
<div class="a" style="left:118px;top:248px;width:449px;height:410px;background:#f9f9f9;border:1px solid #b0b0b0;box-shadow:0 0 3px rgba(0,0,0,0.22)"></div>
<div class="t dl" style="left:310px;top:257px;font-size:12.5px;color:#444">Font</div>
<div class="a" style="left:530px;top:249px;width:32px;height:22px;background:#c75050"></div>
<svg style="left:540px;top:254px" width="12" height="12"><path d="M1.5 1.5 L10.5 10.5 M10.5 1.5 L1.5 10.5" stroke="#fff" stroke-width="2.6"/></svg>
<div class="a" style="left:124px;top:277px;width:437px;height:375px;background:#f0f0f0;border:1px solid #e2e2e2"></div>
<!-- tabs -->
<div class="a" style="left:134px;top:289px;width:91px;height:18px;background:#e5e5e5;border:1px solid #adadad;border-bottom:none"></div>
<div class="t dl" style="left:141px;top:292px">Font and Color</div>
<div class="a" style="left:133px;top:306px;width:419px;height:303px;background:#fff;border:1px solid #8c8c8c"></div>
<div class="a" style="left:224px;top:287px;width:116px;height:20px;background:#fff;border:1px solid #8c8c8c;border-bottom:none"></div>
<div class="t dl" style="left:230px;top:292px">Position and Effects</div>
<!-- panel content -->
<div class="t dl" style="left:148px;top:320px">Position and Spacing:</div>
<div class="a" style="left:265px;top:323px;width:273px;height:1px;background:#a0a0a0"></div>
<div class="t dl" style="left:148px;top:343px">Sub-/Superscript:</div>
<div class="a cb" style="left:257px;top:342px;width:195px;height:20px"></div>
<div class="t dl" style="left:261px;top:346px;color:#000">None</div>
<svg class="cbt" style="left:437px;top:349px" width="8" height="5"><path d="M0 0 H8 L4 4.5Z"/></svg>
<div class="t dl" style="left:148px;top:371px">Position:</div>
<div class="a cb" style="left:257px;top:368px;width:90px;height:21px"></div>
<div class="t dl" style="left:261px;top:373px;color:#000">Normal</div>
<svg class="cbt" style="left:332px;top:376px" width="8" height="5"><path d="M0 0 H8 L4 4.5Z"/></svg>
<div class="t dl" style="left:358px;top:371px">by</div>
<div class="a" style="left:383px;top:368px;width:48px;height:20px;background:#fff;border:1px solid #adadad"></div>
<svg style="left:413px;top:368px" width="18" height="20"><path d="M0.5 0 V20" stroke="#adadad"/><rect x="2.5" y="2.5" width="13" height="7" fill="#f0f0f0" stroke="#a8a8a8"/><rect x="2.5" y="10.5" width="13" height="7" fill="#f0f0f0" stroke="#a8a8a8"/><path d="M6 7.5 H12 L9 4.5Z M6 12.5 H12 L9 15.5Z" fill="#808080"/></svg>
<div class="t dl" style="left:439px;top:371px">pt</div>
<div class="t dl" style="left:148px;top:398px">Character Spacing:</div>
<div class="a" style="left:257px;top:396px;width:90px;height:21px;background:#e5f1fb;border:1px solid #0078d7"></div>
<div class="t dl" style="left:261px;top:401px;color:#000">Expanded</div>
<svg class="cbt" style="left:332px;top:404px" width="8" height="5"><path d="M0 0 H8 L4 4.5Z"/></svg>
<div class="t dl" style="left:358px;top:398px">by</div>
<div class="a" style="left:383px;top:397px;width:48px;height:19px;background:#fff;border:1px solid #adadad"></div>
<div class="t dl" style="left:389px;top:401px;color:#000">5.0</div>
<svg style="left:413px;top:397px" width="18" height="19"><path d="M0.5 0 V19" stroke="#adadad"/><rect x="2.5" y="2.5" width="13" height="6" fill="#f0f0f0" stroke="#a8a8a8"/><rect x="2.5" y="9.5" width="13" height="6" fill="#f0f0f0" stroke="#a8a8a8"/><path d="M6 7.0 H12 L9 4.0Z M6 11.0 H12 L9 14.0Z" fill="#000"/></svg>
<div class="t dl" style="left:439px;top:398px">pt</div>
<div class="t dl" style="left:148px;top:431px">Further Effects:</div>
<div class="a" style="left:230px;top:434px;width:308px;height:1px;background:#a0a0a0"></div>
<div class="t dl" style="left:148px;top:454px">Uppercase:</div>
<div class="a cb" style="left:257px;top:451px;width:150px;height:21px"></div>
<div class="t dl" style="left:261px;top:456px;color:#000">None</div>
<svg class="cbt" style="left:392px;top:459px" width="8" height="5"><path d="M0 0 H8 L4 4.5Z"/></svg>
<div class="t dl" style="left:148px;top:481px">Character Scaling:</div>
<div class="a" style="left:257px;top:479px;width:90px;height:20px;background:#fff;border:1px solid #adadad"></div>
<div class="t dl" style="left:263px;top:483px;color:#000">100</div>
<svg style="left:329px;top:479px" width="18" height="20"><path d="M0.5 0 V20" stroke="#adadad"/><rect x="2.5" y="2.5" width="13" height="7" fill="#f0f0f0" stroke="#a8a8a8"/><rect x="2.5" y="10.5" width="13" height="7" fill="#f0f0f0" stroke="#a8a8a8"/><path d="M6 7.5 H12 L9 4.5Z M6 12.5 H12 L9 15.5Z" fill="#000"/></svg>
<div class="t dl" style="left:358px;top:481px">%</div>
<!-- dropdown list -->
<div class="a" style="left:257px;top:417px;width:90px;height:41px;background:#fff;border:1px solid #646464"></div>
<div class="a" style="left:258px;top:431px;width:88px;height:13px;background:#0078d7"></div>
<div class="t dl" style="left:260px;top:419px;color:#000">Normal</div>
<div class="t dl" style="left:260px;top:432px;color:#fff">Expanded</div>
<div class="t dl" style="left:260px;top:445px;color:#000">Reduced</div>
<!-- buttons -->
<div class="a" style="left:394px;top:617px;width:75px;height:23px;background:#e1e1e1;border:1px solid #0078d7;box-shadow:inset 0 0 0 0.5px #0078d7"></div>
<div class="t dl" style="left:394px;top:623px;width:75px;text-align:center;color:#000">OK</div>
<div class="a" style="left:477px;top:617px;width:75px;height:23px;background:#e1e1e1;border:1px solid #adadad"></div>
<div class="t dl" style="left:477px;top:623px;width:75px;text-align:center;color:#000">Cancel</div>

</body></html>
